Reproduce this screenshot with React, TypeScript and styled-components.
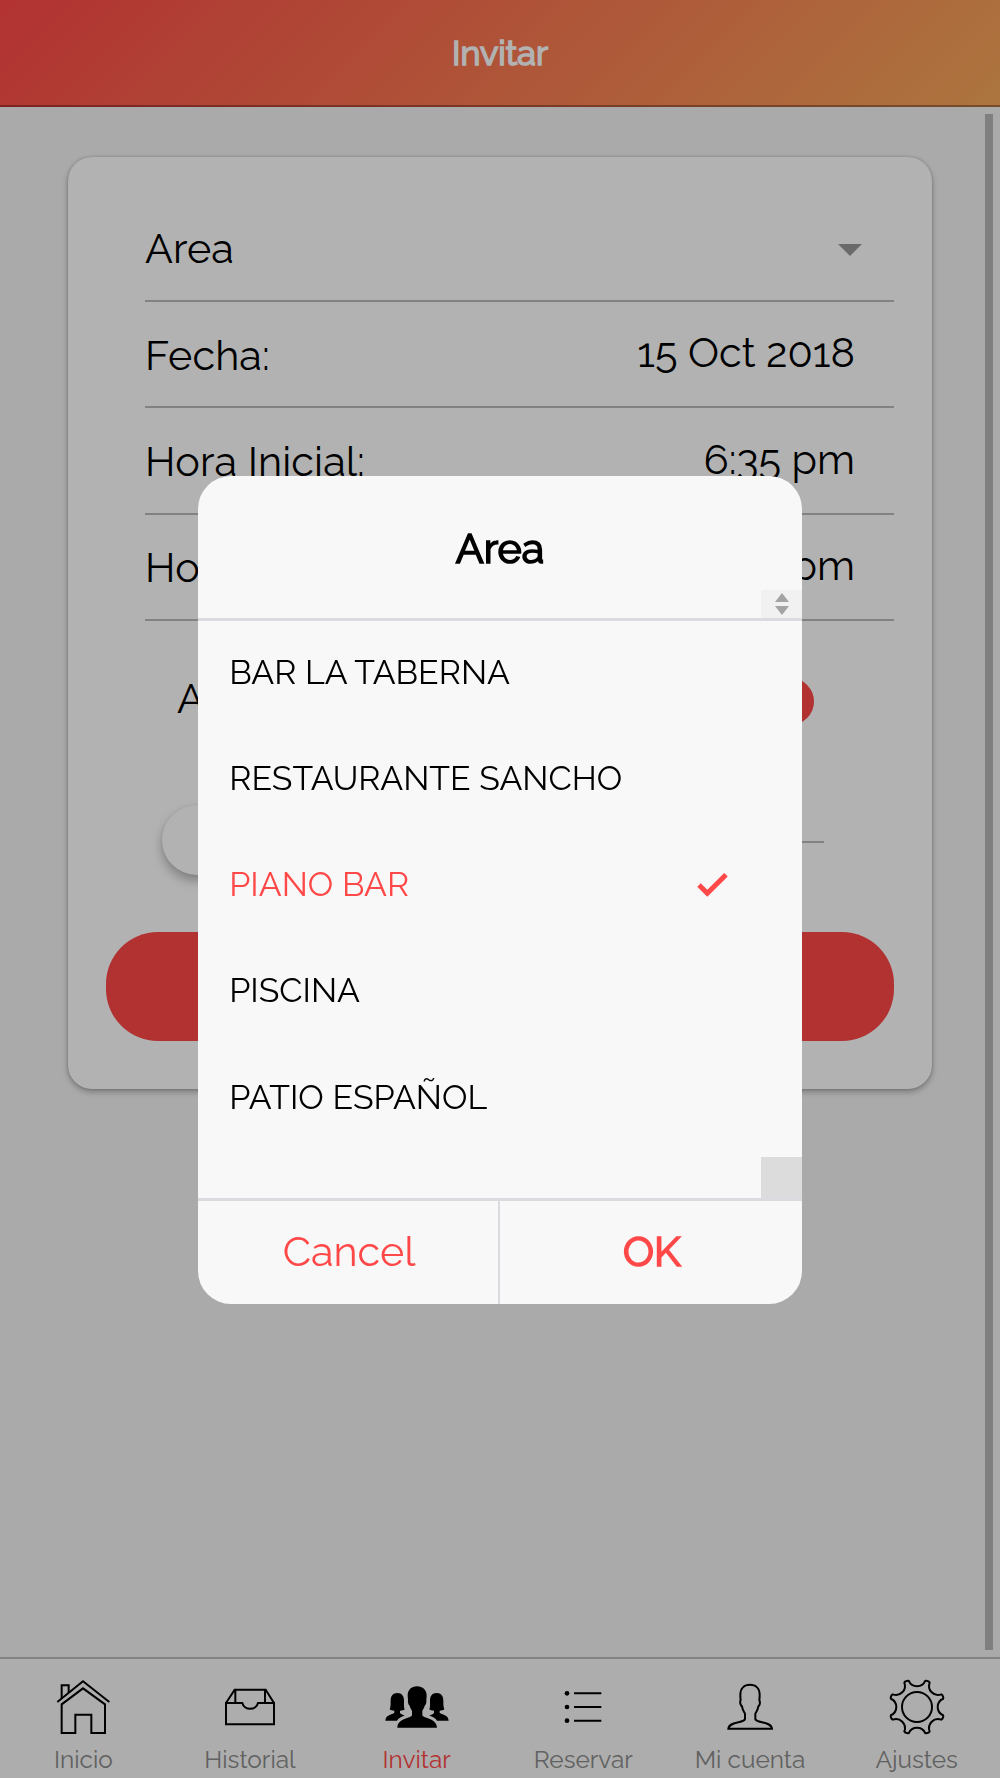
import React from "react";
import styled, { createGlobalStyle } from "styled-components";

const GlobalStyle = createGlobalStyle`
  *, *::before, *::after { box-sizing: border-box; }
  body {
    margin: 0;
    background: #f4f4f4;
    color: #000;
    font-family: Raleway, Lato, "Open Sans", sans-serif;
    font-variant-numeric: oldstyle-nums;
    overflow: hidden;
  }
  button { font: inherit; color: inherit; border: 0; padding: 0; background: none; }
`;

const Text = styled.span<{ $size?: number; $bold?: boolean }>`
  font-size: ${(p) => p.$size ?? 41.3}px;
  font-weight: 380;
  -webkit-text-stroke: ${(p) => (p.$bold ? "1.7px currentColor" : "0")};
  line-height: 1.2;
  white-space: nowrap;
`;

const Page = styled.div`
  display: flex;
  flex-direction: column;
  height: 1778px;
  width: 1000px;
`;

const Header = styled.header`
  display: flex;
  align-items: center;
  justify-content: center;
  flex: none;
  height: 106.5px;
  padding-top: 3px;
  color: #fff;
  background: linear-gradient(135deg, #ff4848 0%, #f7a85a 100%);
  border-bottom: 2px solid rgba(0, 0, 0, 0.3);
`;

const Content = styled.main`
  display: flex;
  justify-content: space-between;
  flex: 1;
  min-height: 0;
  padding: 7.5px 7px 7px 68px;
`;

const ScrollThumb = styled.div`
  width: 8px;
  background: #b6b6b6;
`;

const Card = styled.section`
  width: 864px;
  height: 932px;
  margin-top: 43px;
  padding: 38.5px 38px 0;
  border-radius: 24px;
  background: #fff;
  box-shadow: 0 3px 6px rgba(0, 0, 0, 0.28), 0 0 3px rgba(0, 0, 0, 0.2);
`;

const Field = styled.div`
  display: flex;
  align-items: center;
  justify-content: space-between;
  height: 106.35px;
  margin-left: 39px;
  padding: 3px 39px 0 0;
  border-bottom: 2.6px solid #bbb;
`;

const FieldLabel = styled(Text)`
  letter-spacing: 0.1px;
`;

const FieldValue = styled(Text)`
  padding-bottom: 5px;
`;

const Caret = styled.i`
  margin: 2px -7px 0 0;
  border: 12px solid transparent;
  border-top-color: #999;
  border-bottom: 0;
`;

const GuestsRow = styled.div`
  display: flex;
  align-items: center;
  justify-content: space-between;
  height: 120px;
  margin-top: 21px;
  padding: 0 80px 0 71px;
`;

const GuestsLabel = styled(Text)`
  padding-bottom: 6px;
`;

const Badge = styled.span`
  display: grid;
  place-items: center;
  width: 47px;
  height: 47px;
  border-radius: 50%;
  background: #ff4848;
  color: #fff;
`;

const Range = styled.div`
  display: flex;
  align-items: center;
  height: 70px;
  margin: 43px 70px 0 56px;
`;

const Knob = styled.span`
  flex: none;
  width: 70px;
  height: 70px;
  border-radius: 50%;
  background: #fff;
  box-shadow: 0 6px 11px rgba(0, 0, 0, 0.28), 0 0 3px rgba(0, 0, 0, 0.08);
`;

const Track = styled.span`
  flex: 1;
  height: 2.6px;
  margin-top: 4px;
  background: #bbb;
`;

const Submit = styled.button`
  display: grid;
  place-items: center;
  width: 100%;
  height: 109px;
  margin-top: 57.5px;
  border-radius: 52px;
  background: #ff4848;
`;

const TabBar = styled.nav`
  display: grid;
  grid-template-columns: repeat(6, 1fr);
  flex: none;
  height: 121.5px;
  background: #f8f8f8;
  border-top: 2px solid #bbb;
`;

const Tab = styled.a<{ $active?: boolean }>`
  display: flex;
  flex-direction: column;
  align-items: center;
  padding-top: 19.8px;
  color: ${(p) => (p.$active ? "#ff4848" : "#8c8c8c")};
`;

const TabIcon = styled.svg`
  flex: none;
  width: 80px;
  height: 60px;
  margin-bottom: 7px;
  fill: none;
  stroke: #000;
  stroke-width: 6;
`;

const Overlay = styled.div`
  position: fixed;
  inset: 0;
  display: flex;
  align-items: center;
  justify-content: center;
  padding-top: 2px;
  background: rgba(0, 0, 0, 0.3);
`;

const Dialog = styled.div`
  display: flex;
  flex-direction: column;
  width: 603.5px;
  height: 828px;
  border-radius: 33px;
  overflow: hidden;
  background: #f8f8f8;
`;

const DialogHead = styled.div`
  position: relative;
  display: flex;
  justify-content: center;
  flex: none;
  height: 144.6px;
  padding-top: 47.5px;
  border-bottom: 3px solid #dbdbdf;
`;

const Spinner = styled.div`
  position: absolute;
  right: 0;
  bottom: 0;
  display: flex;
  flex-direction: column;
  align-items: center;
  justify-content: center;
  gap: 4px;
  width: 41px;
  height: 28px;
  padding: 1px 0 0 2px;
  background: #f1f1f1;
`;

const Arrow = styled.i<{ $up?: boolean }>`
  border: 7.5px solid transparent;
  ${(p) => (p.$up ? "border-top: 0; border-bottom: 9px solid #a3a3a3;" : "border-bottom: 0; border-top: 9px solid #a3a3a3;")}
`;

const OptionList = styled.div`
  position: relative;
  flex: 1;
  border-bottom: 3px solid #dbdbdf;
`;

const Option = styled.div<{ $checked?: boolean }>`
  display: flex;
  align-items: center;
  justify-content: space-between;
  height: 106.2px;
  padding: 0 74px 3px 31px;
  color: ${(p) => (p.$checked ? "#ff4848" : "#000")};
`;

const Check = styled.svg`
  width: 31px;
  height: 25px;
  margin-top: 1px;
  fill: none;
  stroke: #ff4848;
  stroke-width: 5;
`;

const ScrollCorner = styled.div`
  position: absolute;
  right: 0;
  bottom: 0;
  width: 41px;
  height: 41px;
  background: #dcdcdc;
`;

const Buttons = styled.div`
  display: grid;
  grid-template-columns: 301.7px 1fr;
  flex: none;
  height: 103.4px;
`;

const DialogButton = styled.button`
  display: grid;
  place-items: center;
  padding: 0 0 1px 2px;
  color: #ff4848;
  &:first-child { border-right: 2.4px solid #dbdbdf; }
`;

const gearOutline = () => {
  const at = (deg: number, r: number) => {
    const a = ((deg - 90) * Math.PI) / 180;
    return `${(770 + r * Math.cos(a)).toFixed(1)} ${(202 + r * Math.sin(a)).toFixed(1)}`;
  };
  let d = `M${at(-17.5, 82)}`;
  for (let k = 0; k < 8; k++) {
    const c = k * 45;
    d += ` A27 27 0 0 0 ${at(c + 17.5, 82)} L${at(c + 20, 84)} L${at(c + 25, 84)} L${at(c + 27.5, 82)}`;
  }
  return d + "Z";
};

const tabs = [
  {
    label: "Inicio",
    box: "130 115 240 180",
    icon: (
      <>
        <path d="M173 187 250 125 329 187" />
        <path d="M186 176V137H207V160" />
        <path d="M186 280V194L250 146 316 194V280H275V225H227V280Z" />
      </>
    ),
  },
  {
    label: "Historial",
    box: "630 115 240 180",
    icon: (
      <>
        <path d="M678 190V254H822V190H774A24 22 0 0 1 727 190Z" />
        <path d="M678 190 704 150H797L822 190M706 150V190M795 150V190" />
      </>
    ),
  },
  {
    label: "Invitar",
    box: "140 115 240 180",
    active: true,
    icon: (
      <g fill="#000" stroke="none">
        <path d="M260 140c-17 0-28 11-28 28 0 5 1 9 1 12-1 7 1 15 5 18 2 9 6 12 7 16v13c-3 10-42 7-44 37h119c-2-30-41-27-44-37v-13c1-4 5-7 7-16 4-3 6-11 5-18 0-3 1-7 1-12 0-17-12-28-29-28z" />
        <path d="M201 160c-14 0-20 10-20 23 0 12 0 18-3 26 4 3 8 4 14 4v6c-6 6-26 5-27 24h35c4-8 12-12 23-15-5-3-12-4-14-8v-7c6 0 11-1 14-4-3-8-2-14-2-26 0-13-6-23-20-23z" />
        <path d="M319 160c14 0 20 10 20 23 0 12 0 18 3 26-4 3-8 4-14 4v6c6 6 26 5 27 24h-35c-4-8-12-12-23-15 5-3 12-4 14-8v-7c-6 0-11-1-14-4 3-8 2-14 2-26 0-13 6-23 20-23z" />
      </g>
    ),
  },
  {
    label: "Reservar",
    box: "640 115 240 180",
    icon: (
      <>
        <path d="M733 161H815M733 202H815M733 243H815" />
        <g fill="#000" stroke="none">
          <circle cx="712" cy="161" r="7" />
          <circle cx="712" cy="202" r="7" />
          <circle cx="712" cy="243" r="7" />
        </g>
      </>
    ),
  },
  {
    label: "Mi cuenta",
    box: "150 115 240 180",
    icon: (
      <path d="M205 267.500H336C334 244 288 251 286 238V222C289 217 293 213 295 200C300 197 301 187 298 181C299 175 299 170 299 165C299 146 287 135.500 270 135.500C253 135.500 241 146 241 165C241 170 241 175 242 181C239 187 241 197 246 200C248 213 252 217 255 222V238C253 251 207 244 205 267.500Z" />
    ),
  },
  {
    label: "Ajustes",
    box: "650 115 240 180",
    icon: (
      <>
        <path d={gearOutline()} />
        <circle cx="770" cy="202" r="45" />
      </>
    ),
  },
];

const fields = [
  { label: "Fecha:", value: "15 Oct 2018" },
  { label: "Hora Inicial:", value: "6:35 pm" },
  { label: "Hora Final:", value: "8:35 pm" },
];

const options = [
  { label: "BAR LA TABERNA" },
  { label: "RESTAURANTE SANCHO" },
  { label: "PIANO BAR", checked: true },
  { label: "PISCINA" },
  { label: "PATIO ESPAÑOL" },
];

export default function App() {
  return (
    <>
      <GlobalStyle />
      <Page>
        <Header>
          <Text $size={34.2} $bold>Invitar</Text>
        </Header>
        <Content>
          <Card>
            <Field>
              <FieldLabel>Area</FieldLabel>
              <Caret />
            </Field>
            {fields.map((f) => (
              <Field key={f.label}>
                <FieldLabel>{f.label}</FieldLabel>
                <FieldValue>{f.value}</FieldValue>
              </Field>
            ))}
            <GuestsRow>
              <GuestsLabel>A</GuestsLabel>
              <Badge />
            </GuestsRow>
            <Range>
              <Knob />
              <Track />
            </Range>
            <Submit />
          </Card>
          <ScrollThumb />
        </Content>
        <TabBar>
          {tabs.map((t) => (
            <Tab key={t.label} $active={t.active}>
              <TabIcon viewBox={t.box}>{t.icon}</TabIcon>
              <Text $size={24.4}>{t.label}</Text>
            </Tab>
          ))}
        </TabBar>
      </Page>
      <Overlay>
        <Dialog>
          <DialogHead>
            <Text $bold>Area</Text>
            <Spinner>
              <Arrow $up />
              <Arrow />
            </Spinner>
          </DialogHead>
          <OptionList>
            {options.map((o) => (
              <Option key={o.label} $checked={o.checked}>
                <Text $size={33.9}>{o.label}</Text>
                {o.checked && (
                  <Check viewBox="0 0 31 25">
                    <path d="M2 12 10.300 20.300 29 1.700" />
                  </Check>
                )}
              </Option>
            ))}
            <ScrollCorner />
          </OptionList>
          <Buttons>
            <DialogButton>
              <Text>Cancel</Text>
            </DialogButton>
            <DialogButton>
              <Text $bold>OK</Text>
            </DialogButton>
          </Buttons>
        </Dialog>
      </Overlay>
    </>
  );
}
